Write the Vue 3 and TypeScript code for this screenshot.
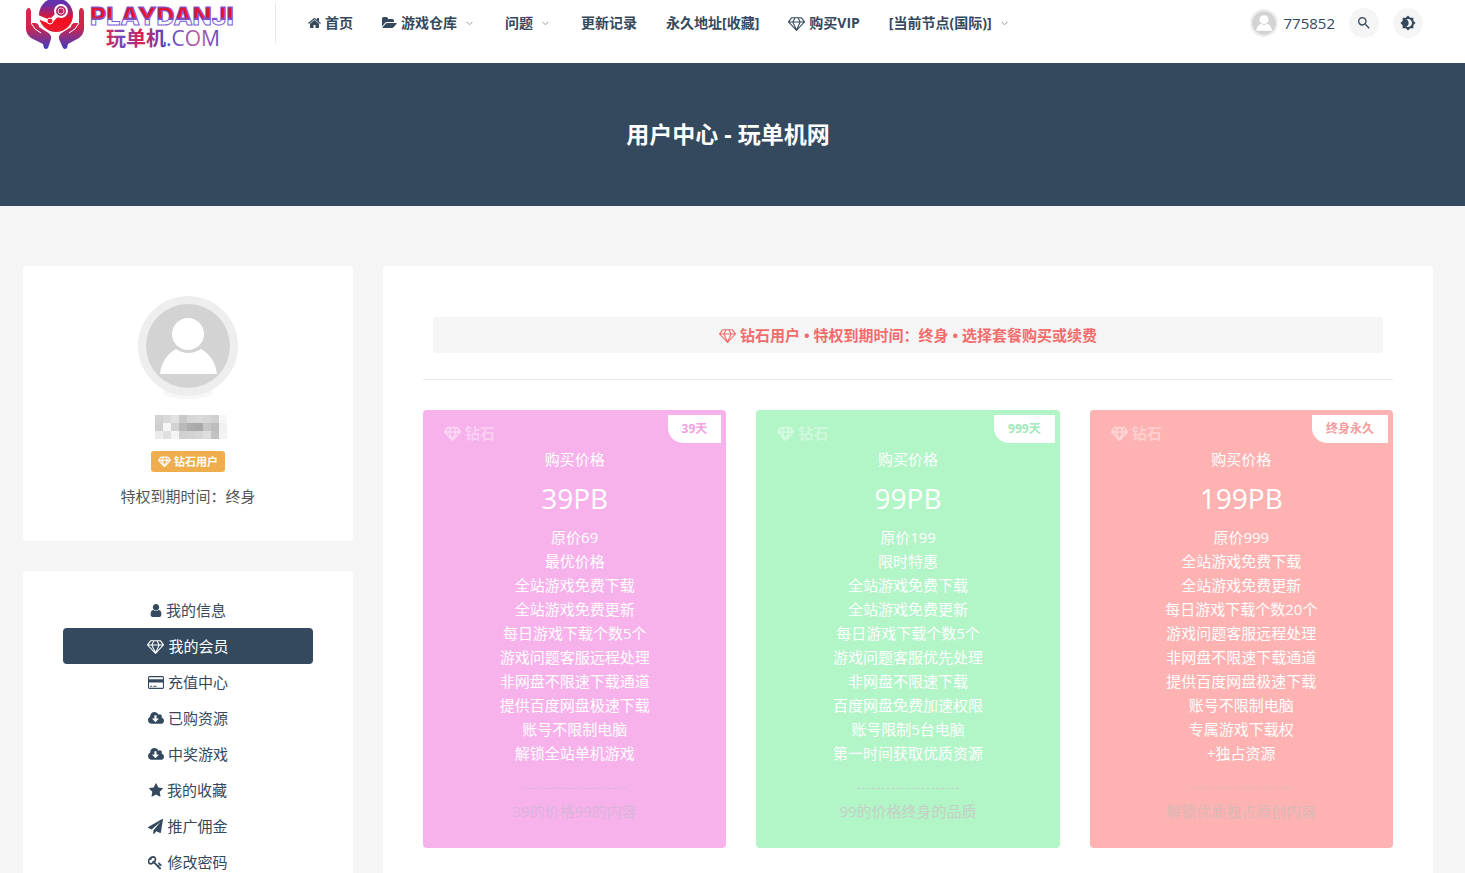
<script setup lang="ts">
interface Icon { box: string; path: string; w: number; h: number }
interface NavItem { label: string; icon?: string; more?: boolean }
interface Plan { tone: string; term: string; price: string; lines: string[]; note: string }

const icons: Record<string, Icon> = {
  home: { box: '64 0 1664 1792', w: 13, h: 14, path: 'M1472 992v480q0 26-19 45t-45 19h-384v-384h-256v384h-384q-26 0-45-19t-19-45v-480q0-1 .5-3t.5-3l575-474 575 474q1 2 1 6zm223-69l-62 74q-8 9-21 11h-3q-13 0-21-7l-692-577-692 577q-12 8-24 7-13-2-21-11l-62-74q-8-10-7-23.5t11-21.5l719-599q32-26 76-26t76 26l244 204v-195q0-14 9-23t23-9h192q14 0 23 9t9 23v408l219 182q10 8 11 21.5t-7 23.5z' },
  folder: { box: '0 0 1920 1792', w: 15, h: 14, path: 'M1879 952q0 31-31 66l-336 396q-43 51-120.5 86.5t-143.5 35.5h-1088q-34 0-60.5-13t-26.5-43q0-31 31-66l336-396q43-51 120.5-86.5t143.5-35.5h1088q34 0 60.5 13t26.5 43zm-343-344v160h-832q-94 0-197 47.5t-164 119.5l-337 396-5 6q0-4-.5-12.5t-.5-12.5v-960q0-92 66-158t158-66h320q92 0 158 66t66 158v32h544q92 0 158 66t66 158z' },
  diamond: { box: '0 0 2048 1792', w: 17, h: 15, path: 'M212 768l623 665-300-665h-323zm812 772l349-772h-698zm-486-900l204-384h-262l-288 384h346zm675 793l623-665h-323zm-530-793h682l-204-384h-274zm827 0h346l-288-384h-262zm141-486l384 512q14 18 13 41.5t-17 40.5l-960 1024q-18 20-47 20t-47-20l-960-1024q-16-17-17-40.5t13-41.5l384-512q18-26 51-26h1152q33 0 51 26z' },
  user: { box: '256 0 1280 1792', w: 12, h: 15, path: 'M1536 1399q0 109-62.5 187t-150.5 78h-854q-88 0-150.5-78t-62.5-187q0-85 8.5-160.5t31.5-152 58.5-131 94-89 134.5-34.5q131 128 313 128t313-128q76 0 134.5 34.5t94 89 58.5 131 31.5 152 8.5 160.5zm-256-887q0 159-112.5 271.5t-271.5 112.5-271.5-112.5-112.5-271.5 112.5-271.5 271.5-112.5 271.5 112.5 112.5 271.5z' },
  card: { box: '0 0 1920 1792', w: 16, h: 15, path: 'M1760 128q66 0 113 47t47 113v1216q0 66-47 113t-113 47h-1600q-66 0-113-47t-47-113v-1216q0-66 47-113t113-47h1600zm-1600 128q-13 0-22.5 9.5t-9.5 22.5v224h1664v-224q0-13-9.5-22.5t-22.5-9.5h-1600zm1600 1280q13 0 22.5-9.5t9.5-22.5v-608h-1664v608q0 13 9.5 22.5t22.5 9.5h1600zm-1504-128v-128h256v128h-256zm384 0v-128h384v128h-384z' },
  cloud: { box: '0 0 1920 1792', w: 16, h: 15, path: 'M1280 928q0-14-9-23t-23-9h-224v-352q0-13-9.5-22.5t-22.5-9.5h-192q-13 0-22.5 9.5t-9.5 22.5v352h-224q-13 0-22.5 9.5t-9.5 22.5q0 14 9 23l352 352q9 9 23 9t23-9l351-351q10-12 10-24zm640 224q0 159-112.5 271.5t-271.5 112.5h-1088q-185 0-316.5-131.5t-131.5-316.5q0-130 70-240t188-165q-2-30-2-43 0-212 150-362t362-150q156 0 285.5 87t188.5 231q71-62 166-62 106 0 181 75t75 181q0 76-41 138 130 31 213.5 135.5t83.5 238.5z' },
  star: { box: '64 0 1664 1792', w: 14, h: 15, path: 'M1728 647q0 22-26 48l-363 354 86 500q1 7 1 20 0 21-10.5 35.5t-30.5 14.5q-19 0-40-12l-449-236-449 236q-22 12-40 12-21 0-31.5-14.5t-10.5-35.5q0-6 2-20l86-500-364-354q-25-27-25-48 0-37 56-46l502-73 225-455q19-41 49-41t49 41l225 455 502 73q56 9 56 46z' },
  plane: { box: '0 0 1792 1792', w: 15, h: 15, path: 'M1764 11q33 24 27 64l-256 1536q-5 29-32 45-14 8-31 8-11 0-24-5l-453-185-242 295q-18 23-49 23-13 0-22-4-19-7-30.5-23.5t-11.5-36.5v-349l864-1059-1069 925-395-162q-37-14-40-55-2-40 32-59l1664-960q15-9 32-9 20 0 36 11z' },
  key: { box: '64 0 1728 1792', w: 15, h: 15, path: 'M832 512q0-80-56-136t-136-56-136 56-56 136q0 42 19 83-41-19-83-19-80 0-136 56t-56 136 56 136 136 56 136-56 56-136q0-42-19-83 41 19 83 19 80 0 136-56t56-136zm851 704q0 17-49 66t-66 49q-9 0-28.5-16t-36.5-33-38.5-40-24.5-26l-96 96 220 220q28 28 28 68 0 42-39 81t-81 39q-40 0-68-28l-671-671q-176 131-365 131-163 0-265.5-102.5t-102.5-265.5q0-160 95-313t248-248 313-95q163 0 265.5 102.5t102.5 265.5q0 189-131 365l355 355 96-96q-3-3-26-24.5t-40-38.5-33-36.5-16-28.5q0-17 49-66t66-49q13 0 23 10 6 6 46 44.5t82 79.5 86.5 86 73 78 28.5 41z' },
}

const nav: NavItem[] = [
  { label: '首页', icon: 'home' },
  { label: '游戏仓库', icon: 'folder', more: true },
  { label: '问题', more: true },
  { label: '更新记录' },
  { label: '永久地址[收藏]' },
  { label: '购买VIP', icon: 'diamond' },
  { label: '[当前节点(国际)]', more: true },
]

const menu = [
  { label: '我的信息', icon: 'user' },
  { label: '我的会员', icon: 'diamond', active: true },
  { label: '充值中心', icon: 'card' },
  { label: '已购资源', icon: 'cloud' },
  { label: '中奖游戏', icon: 'cloud' },
  { label: '我的收藏', icon: 'star' },
  { label: '推广佣金', icon: 'plane' },
  { label: '修改密码', icon: 'key' },
]

const plans: Plan[] = [
  {
    tone: 'violet', term: '39天', price: '39PB', note: '39的价格99的内容',
    lines: ['原价69', '最优价格', '全站游戏免费下载', '全站游戏免费更新', '每日游戏下载个数5个', '游戏问题客服远程处理', '非网盘不限速下载通道', '提供百度网盘极速下载', '账号不限制电脑', '解锁全站单机游戏'],
  },
  {
    tone: 'green', term: '999天', price: '99PB', note: '99的价格终身的品质',
    lines: ['原价199', '限时特惠', '全站游戏免费下载', '全站游戏免费更新', '每日游戏下载个数5个', '游戏问题客服优先处理', '非网盘不限速下载', '百度网盘免费加速权限', '账号限制5台电脑', '第一时间获取优质资源'],
  },
  {
    tone: 'red', term: '终身永久', price: '199PB', note: '解锁优质独占原创内容',
    lines: ['原价999', '全站游戏免费下载', '全站游戏免费更新', '每日游戏下载个数20个', '游戏问题客服远程处理', '非网盘不限速下载通道', '提供百度网盘极速下载', '账号不限制电脑', '专属游戏下载权', '+独占资源'],
  },
]

const mosaic = [
  ['#d3d3d3', '#d9d9d9', '#e2e2e2', '#c9c9c9', '#d6d6d6', '#d9d9d9', '#d6d6d6', '#d0d0d0', '#f7f7f7'],
  ['#cfcfcf', '#f6f6f6', '#d2d2d2', '#b9b9b9', '#adadad', '#a9a9a9', '#c6c6c6', '#bdbdbd', '#f1f1f1'],
  ['#ececec', '#e0e0e0', '#f4f4f4', '#d0d0d0', '#d2d2d2', '#d6d6d6', '#dedede', '#c2c2c2', '#f3f3f3'],
]
</script>

<template>
  <div class="page">
    <header class="top">
      <a class="logo" href="#" aria-label="PLAYDANJI 玩单机.COM">
        <svg width="220" height="60" viewBox="24 -7 220 60">
          <defs>
            <linearGradient id="mark" x1="0" y1="0" x2="0" y2="1">
              <stop offset="0" stop-color="#5a35b8" />
              <stop offset=".2" stop-color="#6a30a8" />
              <stop offset=".65" stop-color="#f50f1c" />
              <stop offset="1" stop-color="#e81c30" />
            </linearGradient>
            <linearGradient id="hand" x1="0" y1="0" x2="0" y2="1">
              <stop offset="0" stop-color="#d42a4c" />
              <stop offset=".45" stop-color="#d22448" />
              <stop offset="1" stop-color="#3f3cc4" />
            </linearGradient>
            <linearGradient id="word" gradientUnits="userSpaceOnUse" x1="0" y1="4" x2="0" y2="27">
              <stop offset="0" stop-color="#7a2fae" />
              <stop offset=".25" stop-color="#ee1029" />
              <stop offset=".55" stop-color="#f01030" />
              <stop offset=".68" stop-color="#7450d0" />
              <stop offset=".72" stop-color="#fff" />
              <stop offset="1" stop-color="#fff" />
            </linearGradient>
            <linearGradient id="sub" gradientUnits="userSpaceOnUse" x1="106" y1="0" x2="222" y2="0">
              <stop offset="0" stop-color="#e8203c" />
              <stop offset=".15" stop-color="#6a48c8" />
              <stop offset=".3" stop-color="#e02048" />
              <stop offset=".52" stop-color="#4a48cc" />
              <stop offset=".8" stop-color="#c05aa0" />
              <stop offset="1" stop-color="#4a46cc" />
            </linearGradient>
          </defs>
          <circle cx="56" cy="15" r="17" fill="url(#mark)" />
          <path d="M38 17l12 5 9-9" fill="none" stroke="#fff" stroke-width="4" stroke-linecap="round" />
          <circle cx="61" cy="11" r="6" fill="#b52b68" stroke="#fff" stroke-width="2" />
          <circle cx="61" cy="11" r="3" fill="none" stroke="#f4c7d8" stroke-width="1" />
          <circle cx="50" cy="21" r="3" fill="#f5192a" stroke="#fff" stroke-width="1" />
          <g fill="url(#hand)">
            <path d="M26 12q0-3 2-4t3 3v12l5 0q3 1 3 4l8 5q5 3 4 7l-3 9q-2 2-4 0l-1-4-12-6q-5-4-5-9z" />
            <path d="M84 12q0-3-2-4t-3 3v12l-5 0q-3 1-3 4l-8 5q-5 3-4 7l4 9q2 2 4 0l1-4 11-6q5-4 5-9z" />
          </g>
          <path d="M31 23q3 7 10 10M79 23q-3 7-10 10" fill="none" stroke="#fff" stroke-width="1" />
          <text class="word" x="90" y="25" fill="url(#word)" stroke="#7b5cd6">PLAYDANJI</text>
          <text class="sub" x="106" y="46" fill="url(#sub)"><tspan class="sub-cn">玩单机</tspan>.COM</text>
        </svg>
      </a>
      <nav class="nav">
        <a v-for="item in nav" :key="item.label" href="#">
          <svg v-if="item.icon" :width="icons[item.icon].w" :height="icons[item.icon].h" :viewBox="icons[item.icon].box" fill="currentColor"><path :d="icons[item.icon].path" /></svg>
          <span>{{ item.label }}</span>
          <svg v-if="item.more" class="chev" width="7" height="5" viewBox="0 0 7 5" fill="none" stroke="#939ca6"><path d="M.5.8l3 3 3-3" /></svg>
        </a>
      </nav>
      <div class="tools">
        <a class="account" href="#">
          <svg width="28" height="28" viewBox="0 0 100 100">
            <circle cx="50" cy="50" r="50" fill="#eee" /><circle cx="50" cy="50" r="42" fill="#d3d3d3" />
            <circle cx="50" cy="38" r="16" fill="#fff" /><path d="M22 78q3-18 16-25 12 8 25 0 13 7 16 25z" fill="#fff" />
          </svg>
          <span>775852</span>
        </a>
        <button class="round" type="button" aria-label="搜索">
          <svg width="16" height="16" viewBox="0 0 24 24" fill="currentColor"><path d="M15.5 14h-.79l-.28-.27A6.47 6.47 0 0 0 16 9.500 6.500 6.500 0 1 0 9.500 16c1.610 0 3.090-.590 4.230-1.570l.270.280v.790l5 4.990L20.490 19l-4.990-5zm-6 0C7.010 14 5 11.990 5 9.500S7.010 5 9.500 5 14 7.010 14 9.500 11.990 14 9.500 14z" /></svg>
        </button>
        <button class="round" type="button" aria-label="夜间模式">
          <svg width="16" height="16" viewBox="0 0 24 24" fill="currentColor" fill-rule="evenodd"><path d="M20 8.690V4h-4.690L12 .690 8.690 4H4v4.690L.690 12 4 15.310V20h4.690L12 23.310 15.310 20H20v-4.690L23.310 12 20 8.690zM12 18c-.890 0-1.740-.200-2.500-.550C11.560 16.500 13 14.420 13 12s-1.440-4.500-3.500-5.450C10.260 6.200 11.110 6 12 6c3.310 0 6 2.690 6 6s-2.690 6-6 6z" /></svg>
        </button>
      </div>
    </header>

    <section class="hero"><h1>用户中心 - 玩单机网</h1></section>

    <div class="body">
      <aside class="side">
        <section class="panel profile">
          <svg width="100" height="104" viewBox="0 0 100 104">
            <ellipse cx="50" cy="96" rx="25" ry="7" fill="#f7f7f7" />
            <circle cx="50" cy="50" r="50" fill="#eee" /><circle cx="50" cy="50" r="42" fill="#d3d3d3" />
            <circle cx="50" cy="38" r="16" fill="#fff" /><path d="M22 78q2-17 16-25 12 8 25 0 14 8 16 25z" fill="#fff" />
          </svg>
          <svg class="mosaic" width="72" height="24" viewBox="0 0 72 24" shape-rendering="crispEdges">
            <template v-for="(row, r) in mosaic" :key="r">
              <rect v-for="(c, i) in row" :key="i" :x="i * 8" :y="r * 8" width="8" height="8" :fill="c" />
            </template>
          </svg>
          <span class="tag">
            <svg class="bold" width="13" height="11" :viewBox="icons.diamond.box" fill="currentColor"><path :d="icons.diamond.path" /></svg>
            钻石用户
          </span>
          <p>特权到期时间：终身</p>
        </section>
        <nav class="panel menu">
          <a v-for="m in menu" :key="m.label" href="#" :class="{ active: m.active }">
            <svg :width="icons[m.icon].w" :height="icons[m.icon].h" :viewBox="icons[m.icon].box" fill="currentColor"><path :d="icons[m.icon].path" /></svg>
            {{ m.label }}
          </a>
        </nav>
      </aside>

      <main class="panel main">
        <p class="notice">
          <svg width="17" height="15" :viewBox="icons.diamond.box" fill="currentColor"><path :d="icons.diamond.path" /></svg>
          钻石用户 • 特权到期时间：终身 • 选择套餐购买或续费
        </p>
        <hr />
        <div class="plans">
          <article v-for="p in plans" :key="p.price" class="plan" :class="p.tone">
            <span class="term">{{ p.term }}</span>
            <h2>
              <svg class="bold" width="17" height="15" :viewBox="icons.diamond.box" fill="currentColor"><path :d="icons.diamond.path" /></svg>
              钻石
            </h2>
            <p>购买价格</p>
            <strong>{{ p.price }}</strong>
            <ul><li v-for="l in p.lines" :key="l">{{ l }}</li></ul>
            <footer>{{ p.note }}</footer>
          </article>
        </div>
      </main>
    </div>
  </div>
</template>

<style>
body { margin: 0; background: #f5f5f5; }
</style>

<style scoped>
.page { font: 15px/24px "Open Sans", "Noto Sans CJK SC", sans-serif; color: #34495e; overflow: hidden; }
a { color: inherit; text-decoration: none; }
h1, h2, p, ul { margin: 0; padding: 0; }
svg { flex: none; display: block; }
.bold path { stroke: currentColor; stroke-width: 80px; }
.top { display: flex; align-items: center; height: 46px; padding: 0 42px 17px 24px; background: #fff; }
.logo { padding-right: 31px; height: 40px; display: flex; align-items: center; border-right: 1px solid #e8e8e8; }
.logo svg { overflow: visible; }
.word { font: 800 25px Inter, sans-serif; stroke-width: 1px; }
.sub { font: 21px "Open Sans", sans-serif; }
.sub-cn { font: bold 20px "Noto Sans CJK SC", sans-serif; }
.nav { display: flex; gap: 29px; margin-left: 32px; font-size: 14px; font-weight: bold; white-space: nowrap; }
.nav a { display: flex; align-items: center; gap: 4px; }
.chev { margin: 0 3px 0 5px; }
.tools { margin-left: auto; display: flex; align-items: center; gap: 14px; }
.account { display: flex; align-items: center; gap: 6px; }
.round { width: 30px; height: 30px; border: 0; border-radius: 50%; background: #f5f5f5; padding: 0; display: grid; place-items: center; color: #34495e; }
.hero { background: #34495e; color: #fff; padding: 55px 9px 56px 0; text-align: center; }
h1 { font-size: 23px; line-height: 32px; }
.body { display: flex; align-items: flex-start; gap: 30px; padding: 60px 32px 30px 23px; }
.side { width: 330px; flex: none; display: flex; flex-direction: column; gap: 30px; }
.panel { background: #fff; border-radius: 4px; }
.profile { display: flex; flex-direction: column; align-items: center; padding: 30px 0 33px; color: #555; }
.mosaic { margin: 15px 0 12px 6px; }
.tag { display: flex; align-items: center; gap: 3px; height: 21px; padding: 0 7px; margin-bottom: 12px; border-radius: 3px; background: #f0ad4e; color: #fff; font-size: 11px; font-weight: bold; }
.menu { padding: 21px 40px; }
.menu a { display: flex; align-items: center; justify-content: center; gap: 4px; height: 36px; border-radius: 4px; }
.menu .active { background: #34495e; color: #fff; }
.main { flex: 1; min-width: 0; padding: 51px 40px 40px; }
.notice { display: flex; align-items: center; justify-content: center; gap: 4px; height: 36px; margin: 0 10px; border-radius: 4px; background: #f5f5f5; color: #f36c6c; font-weight: bold; }
hr { border: 0; height: 1px; background: #e9e9e9; margin: 26px 0 30px; }
.plans { display: grid; grid-template-columns: repeat(3, 1fr); gap: 30px; }
.plan { position: relative; border-radius: 4px; padding: 11px 21px 25px; text-align: center; color: #fff; }
.violet { background: #f7b2ec; --tone: #f3a0e4; --soft: #d9b4d8; }
.green { background: #b2f5c7; --tone: #a0eab8; --soft: #c6cfc6; }
.red { background: #feb2b2; --tone: #f79c9c; --soft: #d8b9b5; }
h2 { display: flex; align-items: center; gap: 4px; font-size: 15px; line-height: 24px; color: rgba(255, 255, 255, .4); }
.plan p { margin-top: 2px; }
.plan strong { display: block; font-size: 28px; font-weight: 500; line-height: 34px; margin: 10px 0; }
ul { list-style: none; }
.term { position: absolute; top: 5px; right: 5px; height: 28px; line-height: 28px; padding: 0 14px; border-radius: 0 0 0 15px; background: #fff; color: var(--tone); font-size: 12px; font-weight: bold; }
footer { margin-top: 23px; padding-top: 11px; color: var(--soft); display: flex; flex-direction: column; align-items: center; }
footer::before { content: ""; width: 102px; border-top: 1px dashed var(--soft); margin: -11px 0 10px; }
</style>
